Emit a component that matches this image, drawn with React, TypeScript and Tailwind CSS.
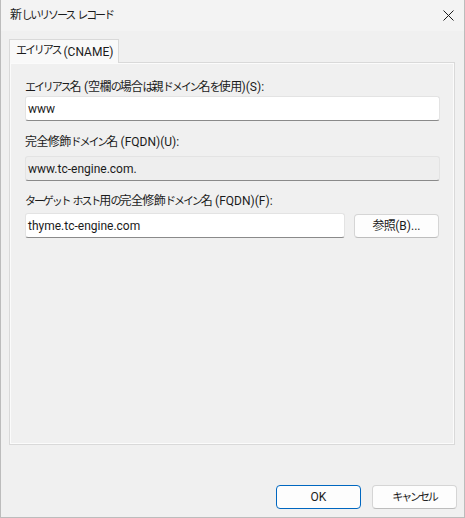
import React from "react";

const font = { fontFamily: 'Roboto, "Noto Sans CJK JP", sans-serif' };

function JP({ text }: { text: string }) {
  const parts: { t: string; k: "kana" | "kanji" | "latin" }[] = [];
  for (const ch of text) {
    const code = ch.codePointAt(0) || 0;
    const k: "kana" | "kanji" | "latin" =
      code >= 0x3040 && code <= 0x30ff ? "kana" : code >= 0x4e00 && code <= 0x9fff ? "kanji" : "latin";
    const last = parts[parts.length - 1];
    if (last && last.k === k) last.t += ch;
    else parts.push({ t: ch, k });
  }
  return (
    <>
      {parts.map((p, i) =>
        p.k === "kana" ? (
          <span key={i} className="text-[11px] tracking-[-2.1px]">{p.t}</span>
        ) : p.k === "kanji" ? (
          <span key={i} className="tracking-[-0.6px]">{p.t}</span>
        ) : (
          <span key={i}>{p.t}</span>
        )
      )}
    </>
  );
}

function Label({ text, className = "" }: { text: string; className?: string }) {
  return (
    <div className={"h-[16px] leading-[16px] text-[12px] text-[#1b1b1b] whitespace-nowrap " + className}>
      <JP text={text} />
    </div>
  );
}

function Input({ value, readOnly = false, className = "" }: { value: string; readOnly?: boolean; className?: string }) {
  return (
    <div
      className={
        "h-[25px] rounded-[3px] border border-[#e3e3e3] border-b-[#8a8a8a] flex items-center pl-[2px] text-[12px] text-[#1b1b1b] whitespace-nowrap " +
        (readOnly ? "bg-[#eeeeee] " : "bg-white ") +
        className
      }
    >
      {value}
    </div>
  );
}

function Button({ text, primary = false, className = "" }: { text: string; primary?: boolean; className?: string }) {
  return (
    <div
      className={
        "h-[24px] w-[85px] rounded-[4px] flex items-center justify-center text-[12px] text-[#1b1b1b] bg-[#fdfdfd] border whitespace-nowrap " +
        (primary ? "border-[#0067c0]" : "border-[#d5d5d5] border-b-[#bdbdbd]") +
        " " +
        className
      }
    >
      <span>
        <JP text={text} />
      </span>
    </div>
  );
}

export default function App() {
  return (
    <div style={font} className="w-[465px] h-[518px] bg-[#f0f0f0] border-l border-r border-b border-[#bcbcbc] flex flex-col overflow-hidden">
      <div className="h-[31px] bg-[#f3f3f3] flex items-center justify-between pl-[9px] pr-[10px] shrink-0">
        <span className="text-[12px] text-[#1b1b1b] whitespace-nowrap">
          <JP text="新しいリソース レコード" />
        </span>
        <svg width="11" height="11" viewBox="0 0 11 11">
          <path d="M0.5 0.5 L10.5 10.5 M10.5 0.5 L0.5 10.5" stroke="#1b1b1b" strokeWidth="1" />
        </svg>
      </div>
      <div className="pl-[8px] pt-[8px] flex flex-col">
        <div className="flex">
          <div className="h-[24px] w-[110px] bg-[#f9f9f9] border border-b-0 border-[#d9d9d9] flex items-center pl-[6px] text-[12px] text-[#1b1b1b] relative z-10 -mb-[1px] whitespace-nowrap">
            <JP text="エイリアス" />
            <span className="ml-[3px]">(CNAME)</span>
          </div>
        </div>
        <div className="w-[446px] h-[383px] border border-[#d9d9d9] bg-[#f0f0f0] shadow-[inset_0_0_0_1px_#fbfbfb] pl-[15px] pr-[14px] pt-[16px] flex flex-col">
          <Label text="エイリアス名 (空欄の場合は親ドメイン名を使用)(S):" />
          <Input value="www" className="mt-[1px]" />
          <Label className="mt-[13px]" text="完全修飾ドメイン名 (FQDN)(U):" />
          <Input value="www.tc-engine.com." readOnly className="mt-[6px]" />
          <Label className="mt-[12px]" text="ターゲット ホスト用の完全修飾ドメイン名 (FQDN)(F):" />
          <div className="mt-[4px] flex items-center">
            <Input value="thyme.tc-engine.com" className="w-[320px]" />
            <Button className="ml-[9px]" text="参照(B)..." />
          </div>
        </div>
      </div>
      <div className="mt-[40px] flex justify-end pr-[7px] gap-[11px]">
        <Button primary text="OK" />
        <Button text="キャンセル" />
      </div>
    </div>
  );
}
